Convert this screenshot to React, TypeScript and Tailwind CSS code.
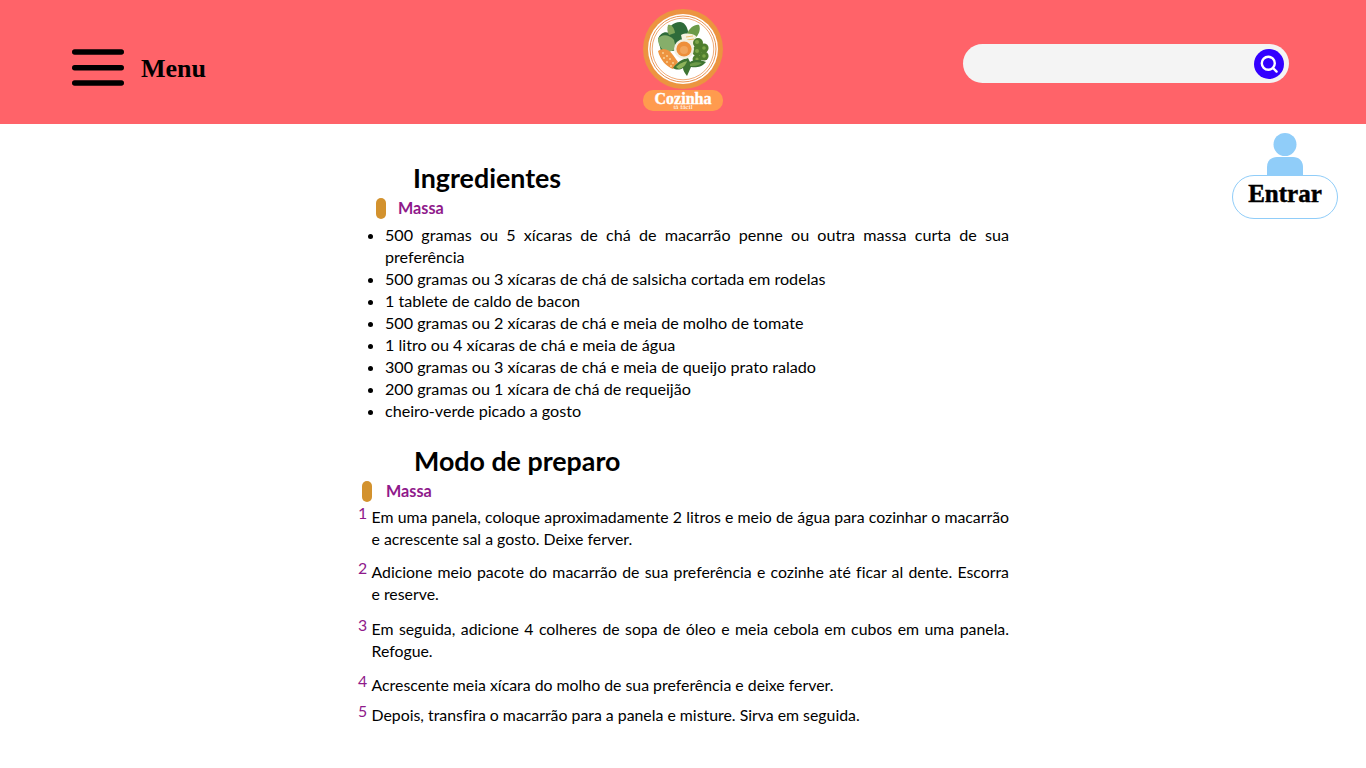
const ingredients = [
  "500 gramas ou 5 xícaras de chá de macarrão penne ou outra massa curta de sua preferência",
  "500 gramas ou 3 xícaras de chá de salsicha cortada em rodelas",
  "1 tablete de caldo de bacon",
  "500 gramas ou 2 xícaras de chá e meia de molho de tomate",
  "1 litro ou 4 xícaras de chá e meia de água",
  "300 gramas ou 3 xícaras de chá e meia de queijo prato ralado",
  "200 gramas ou 1 xícara de chá de requeijão",
  "cheiro-verde picado a gosto",
];

const steps = [
  { text: "Em uma panela, coloque aproximadamente 2 litros e meio de água para cozinhar o macarrão e acrescente sal a gosto. Deixe ferver.", cls: "mt-[4px]" },
  { text: "Adicione meio pacote do macarrão de sua preferência e cozinhe até ficar al dente. Escorra e\u00A0reserve.", cls: "mt-[11px]" },
  { text: "Em seguida, adicione 4 colheres de sopa de óleo e meia cebola em cubos em uma panela. Refogue.", cls: "mt-[13px]" },
  { text: "Acrescente meia xícara do molho de sua preferência e deixe ferver.", cls: "mt-[12px]" },
  { text: "Depois, transfira o macarrão para a panela e misture. Sirva em seguida.", cls: "mt-[8px]" },
];

function Logo() {
  return (
    <div className="flex flex-col items-center w-[80px] mt-[9px]">
      <svg width="80" height="80" viewBox="0 0 80 80" className="block">
        <circle cx="40" cy="40" r="40" fill="#EC9440" />
        <circle cx="40" cy="40" r="35" fill="#fff" />
        <circle cx="40" cy="40" r="33" fill="none" stroke="#E8873F" strokeWidth="0.9" />
        <circle cx="40" cy="40" r="30.8" fill="none" stroke="#E8873F" strokeWidth="0.7" />
        {/* leaves top */}
        <path d="M15 30 C17 24 22 22 26 24 C25 18 30 13 37 13 C41 13 44 17 45 22 L44 36 L30 42 L18 42 Z" fill="#2F6B3A" />
        <path d="M15 30 C18 25 26 25 31 31 L33 40 L24 44 C19 41 15 36 15 30 Z" fill="#86AE6A" />
        <path d="M25 16 C28 15 31 18 32 24 L26 26 C24 23 24 19 25 16 Z" fill="#7FA65A" />
        <path d="M44 25 C46 19 52 15 56 16 C58 20 56 26 52 29 L45 30 Z" fill="#6C9A48" />
        <path d="M38 26 C42 24 48 24 53 27 L52 34 C49 37 44 37 40 35 Z" fill="#F6F1E0" />
        <path d="M43 28 L50 27 M44 31 L51 30" stroke="#EFBF6A" strokeWidth="1" />
        {/* broccoli */}
        <g fill="#4F7E2E">
          <circle cx="55" cy="34" r="5" />
          <circle cx="61" cy="39" r="4.6" />
          <circle cx="54" cy="42" r="5" />
          <circle cx="61" cy="47" r="4.6" />
          <circle cx="54" cy="50" r="4.4" />
        </g>
        <g fill="#7DA548">
          <circle cx="54" cy="33" r="2" />
          <circle cx="61" cy="39" r="1.8" />
          <circle cx="54" cy="42" r="2" />
          <circle cx="61" cy="47" r="1.8" />
          <circle cx="54" cy="50" r="1.6" />
        </g>
        {/* grain */}
        <path d="M15 42 C20 38 26 40 30 46 L35 53 L30 60 C24 58 17 51 15 42 Z" fill="#EE9440" />
        <g fill="#F8CF95">
          <circle cx="20" cy="44" r="1" />
          <circle cx="24" cy="47" r="1" />
          <circle cx="21" cy="49" r="1" />
          <circle cx="27" cy="50" r="1" />
          <circle cx="24" cy="53" r="1" />
          <circle cx="30" cy="54" r="1" />
          <circle cx="28" cy="57" r="1" />
        </g>
        {/* bottom leaves */}
        <path d="M30 59 C35 52 40 50 45 49 L47 53 C52 50 58 51 63 53 C59 58 53 59 48 58 L44 67 C42 64 40 62 40 59 C37 61 33 61 30 59 Z" fill="#3E7433" />
        <path d="M33 58 C37 54 41 53 44 52 C43 56 40 59 36 60 Z" fill="#8DB35A" />
        <path d="M47 55 C51 53 55 53 59 54 C55 57 51 57 47 57 Z" fill="#6C9A48" />
        {/* bowl */}
        <circle cx="41" cy="40" r="10" fill="#F3F0E2" />
        <circle cx="41" cy="40" r="7.6" fill="#EE8F3B" />
        <circle cx="41" cy="41" r="4" fill="#F2A55C" />
      </svg>
      <div className="mt-[1px] w-[80px] h-[21px] rounded-[10px] bg-[#FF9B4E] relative flex justify-center">
        <span className="text-white font-bold text-[16px] leading-[18px] font-['Liberation_Serif',serif] [-webkit-text-stroke:0.4px_white]">Cozinha</span>
        <span className="absolute top-[14px] left-0 right-0 text-center text-white text-[7px] leading-[6px] font-['Liberation_Serif',serif]">tá fácil</span>
      </div>
    </div>
  );
}

function Search() {
  return (
    <div className="w-[326px] h-[39px] mt-[44px] rounded-[20px] bg-[#F4F4F4] flex items-center justify-end pr-[5px]">
      <div className="w-[30px] h-[30px] rounded-full bg-[#3300FF] flex items-center justify-center">
        <svg width="20" height="20" viewBox="0 0 20 20" fill="none" stroke="#fff" strokeWidth="2.4" strokeLinecap="round">
          <circle cx="9.3" cy="9.3" r="6.5" />
          <path d="M14.5 14.5L17.6 17.6" />
        </svg>
      </div>
    </div>
  );
}

function Subhead({ cls, gap }: { cls: string; gap: string }) {
  return (
    <div className={`flex items-center h-[22px] ${cls}`}>
      <span className="block w-[10px] h-[21px] rounded-[5px] bg-[#D3922E]" />
      <span className={`${gap} font-bold text-[16.2px] leading-[22px] text-[#8F1A8B]`}>Massa</span>
    </div>
  );
}

export default function App() {
  return (
    <div className="relative min-h-[768px] bg-white text-black font-['Lato','Liberation_Sans',sans-serif]">
      <header className="h-[124px] bg-[#FF6369] flex items-start pl-[72px]">
        <div className="flex items-center mt-[48px] w-[571px]">
          <svg width="52" height="39" viewBox="0 0 52 39" fill="#000" className="block shrink-0">
            <rect x="0" y="0.3" width="52" height="5.4" rx="2.7" />
            <rect x="0" y="16" width="52" height="5.4" rx="2.7" />
            <rect x="0" y="31.3" width="52" height="5.4" rx="2.7" />
          </svg>
          <span className="ml-[17px] mt-[1px] font-bold text-[26px] leading-[40px] font-['Liberation_Serif',serif]">Menu</span>
        </div>
        <Logo />
        <div className="ml-[240px]">
          <Search />
        </div>
      </header>

      <div className="absolute top-[133px] left-[1232px] w-[106px] flex flex-col items-center">
        <svg width="36" height="43" viewBox="0 0 36 43" fill="#90CDF9" className="block">
          <circle cx="18" cy="11.5" r="11.5" />
          <path d="M0 43V34C0 28 4 24 10 24H26C32 24 36 28 36 34V43Z" />
        </svg>
        <div className="w-[106px] h-[44px] -mt-[1px] rounded-[22px] border border-[#90CDF9] bg-white flex items-center justify-center font-['Liberation_Serif',serif] font-bold text-[25px] leading-[36px] pb-[6px] [-webkit-text-stroke:0.5px_black]">
          Entrar
        </div>
      </div>

      <main className="w-[651px] ml-[358px] leading-[22px] [font-variant-ligatures:none]">
        <h2 className="ml-[55px] mt-[37px] text-[26.8px] leading-[34px] font-bold">Ingredientes</h2>
        <Subhead cls="ml-[18px] mt-[2px]" gap="ml-[12px]" />
        <ul className="mt-[5px] pl-[27px] list-disc text-justify text-[16.15px]">
          {ingredients.map((item) => (
            <li key={item}>{item}</li>
          ))}
        </ul>
        <h2 className="ml-[56px] mt-[22px] text-[26.8px] leading-[34px] font-bold">Modo de preparo</h2>
        <Subhead cls="ml-[4px] mt-[2px]" gap="ml-[14px]" />
        {steps.map((s, i) => (
          <div key={s.text} className={`flex text-[15.85px] ${s.cls}`}>
            <span className="w-[13.5px] shrink-0 -mt-[4px] text-[#8F1A8B]">{i + 1}</span>
            <p className="flex-1 text-justify">{s.text}</p>
          </div>
        ))}
      </main>
    </div>
  );
}
